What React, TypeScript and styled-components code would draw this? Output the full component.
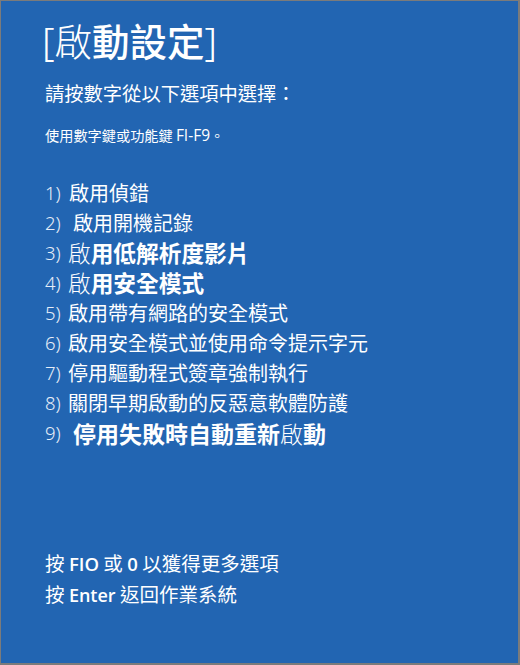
import React from 'react';
import styled, { createGlobalStyle } from 'styled-components';

const Global = createGlobalStyle`
  html, body { margin: 0; padding: 0; background: #2265b2; }
  body {
    font-family: "Noto Sans", "Noto Sans CJK TC", sans-serif;
    color: #ffffff;
    -webkit-font-smoothing: antialiased;
  }
`;

const Screen = styled.div`
  box-sizing: border-box;
  width: 520px;
  height: 665px;
  background: #2265b2;
  border-style: solid;
  border-color: #7b7b7b;
  border-width: 1px 2px 2px 1px;
  padding: 17px 0 0 44px;
  display: flex;
  flex-direction: column;
`;

const Title = styled.h1`
  margin: 0 0 0 -3px;
  font-family: "Noto Sans CJK TC", sans-serif;
  font-size: 37.5px;
  line-height: 44px;
  height: 44px;
  font-weight: 500;
  white-space: nowrap;
`;

const Bracket = styled.span`
  font-family: "Noto Sans", sans-serif;
  font-weight: 300;
  font-size: 39px;
`;

const Light = styled.span`
  font-weight: 300;
`;

const Medium = styled.span`
  font-weight: 500;
`;

const Prompt = styled.p`
  margin: 16px 0 0;
  font-family: "Noto Sans CJK TC", sans-serif;
  font-size: 19.3px;
  line-height: 30px;
  font-weight: 400;
  white-space: nowrap;
`;

const Hint = styled.p`
  margin: 17px 0 0;
  font-family: "Noto Sans CJK TC", sans-serif;
  font-size: 14.2px;
  line-height: 20px;
  font-weight: 400;
  white-space: nowrap;
`;

const Latin = styled.span<{ $bold?: boolean; $size?: number }>`
  font-family: "Open Sans", "Noto Sans", sans-serif;
  font-weight: ${(p) => (p.$bold ? 600 : 400)};
  font-size: ${(p) => (p.$size ? `${p.$size}px` : 'inherit')};
`;

const List = styled.ol`
  margin: 33px 0 0;
  padding: 0;
  list-style: none;
  display: flex;
  flex-direction: column;
`;

const Row = styled.li`
  display: flex;
  align-items: center;
  height: 30px;
  white-space: nowrap;
`;

const Num = styled.span`
  width: 23px;
  flex: none;
  font-family: "Noto Sans", sans-serif;
  font-weight: 300;
  font-size: 18.5px;
  line-height: 30px;
  color: #e6edf8;
`;

type Size = 'normal' | 'bold' | 'large';

const sizes: Record<Size, { fs: number; fw: number }> = {
  normal: { fs: 20, fw: 400 },
  bold: { fs: 22.7, fw: 700 },
  large: { fs: 23, fw: 700 },
};

const Label = styled.span<{ $size: Size; $indent: number }>`
  margin-left: ${(p) => p.$indent}px;
  font-family: "Noto Sans CJK TC", sans-serif;
  font-size: ${(p) => sizes[p.$size].fs}px;
  font-weight: ${(p) => sizes[p.$size].fw};
  line-height: 30px;
`;

const Footer = styled.div`
  margin-top: 100px;
  display: flex;
  flex-direction: column;
`;

const FooterLine = styled.p`
  margin: 0;
  font-family: "Noto Sans CJK TC", sans-serif;
  font-size: 19.5px;
  line-height: 30px;
  font-weight: 400;
  white-space: nowrap;
`;

type Item = { n: string; size: Size; indent: number; content: React.ReactNode };

const items: Item[] = [
  { n: '1)', size: 'normal', indent: 1, content: '啟用偵錯' },
  { n: '2)', size: 'normal', indent: 5, content: '啟用開機記錄' },
  {
    n: '3)',
    size: 'bold',
    indent: 0,
    content: (
      <>
        <Light>啟</Light>用低解析度影片
      </>
    ),
  },
  {
    n: '4)',
    size: 'bold',
    indent: 0,
    content: (
      <>
        <Light>啟</Light>用安全模式
      </>
    ),
  },
  { n: '5)', size: 'normal', indent: 0, content: '啟用帶有網路的安全模式' },
  { n: '6)', size: 'normal', indent: 0, content: '啟用安全模式並使用命令提示字元' },
  { n: '7)', size: 'normal', indent: 0, content: '停用驅動程式簽章強制執行' },
  { n: '8)', size: 'normal', indent: 0, content: '關閉早期啟動的反惡意軟體防護' },
  {
    n: '9)',
    size: 'large',
    indent: 5,
    content: (
      <>
        停用失敗時自動重新<Light>啟</Light>動
      </>
    ),
  },
];

export default function App() {
  return (
    <>
      <Global />
      <Screen>
        <Title>
          <Bracket>[</Bracket>
          <Light>啟</Light>
          <Medium>動設定</Medium>
          <Bracket>]</Bracket>
        </Title>
        <Prompt>請按數字從以下選項中選擇：</Prompt>
        <Hint>
          使用數字鍵或功能鍵 <Latin $size={15.5}>FI-F9</Latin>。
        </Hint>
        <List>
          {items.map((it) => (
            <Row key={it.n}>
              <Num>{it.n}</Num>
              <Label $size={it.size} $indent={it.indent}>
                {it.content}
              </Label>
            </Row>
          ))}
        </List>
        <Footer>
          <FooterLine>
            按 <Latin $bold $size={18.5}>FIO</Latin> 或 <Latin $bold $size={18.5}>0</Latin> 以獲得更多選項
          </FooterLine>
          <FooterLine>
            按 <Latin $bold $size={18}>Enter</Latin> 返回作業系統
          </FooterLine>
        </Footer>
      </Screen>
    </>
  );
}
